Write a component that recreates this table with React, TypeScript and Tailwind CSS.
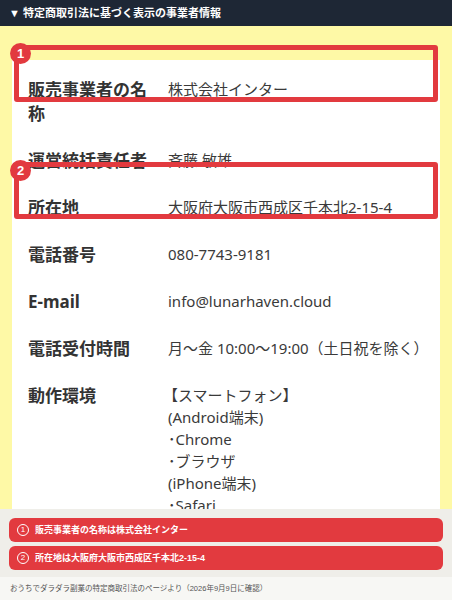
const ROWS = [
  { label: '販売事業者の名称', value: ['株式会社インター'] },
  { label: '運営統括責任者', value: ['斉藤 敏雄'] },
  { label: '所在地', value: ['大阪府大阪市西成区千本北2-15-4'] },
  { label: '電話番号', value: ['080-7743-9181'] },
  { label: 'E-mail', value: ['info@lunarhaven.cloud'] },
  { label: '電話受付時間', value: ['月〜金 10:00〜19:00（土日祝を除く）'] },
  {
    label: '動作環境',
    value: ['【スマートフォン】', '(Android端末)', '･Chrome', '･ブラウザ', '(iPhone端末)', '･Safari'],
  },
]

const NOTES = [
  { num: '1', text: '販売事業者の名称は株式会社インター' },
  { num: '2', text: '所在地は大阪府大阪市西成区千本北2-15-4' },
]

const font = "font-['Liberation_Sans','Noto_Sans_CJK_JP',sans-serif]"

function Marker({ num, top }: { num: string; top: string }) {
  return (
    <div className={`absolute left-[14px] w-[424px] h-[57px] ${top} rounded-[3px] border-[5px] border-[#e23a3f]`}>
      <div className="absolute -left-[9px] -top-[7px] w-[21px] h-[21px] rounded-full bg-[#e23a3f] flex items-center justify-center text-white text-[13px] font-bold leading-none">
        {num}
      </div>
    </div>
  )
}

export default function App() {
  return (
    <div className={`h-[600px] w-[452px] flex flex-col overflow-hidden ${font}`}>
      <div className="h-[26px] shrink-0 bg-[#1e2735] flex items-center pl-[9px] text-white text-[11px] font-bold">
        ▼ 特定商取引法に基づく表示の事業者情報
      </div>

      <main className="relative flex-1 min-h-0 overflow-hidden bg-[#fef9a6] px-[12px] pt-[34px]">
        <div className="bg-white pt-[7px] pl-[16px] pr-[12px]">
          {ROWS.map(({ label, value }) => (
            <div key={label} className="flex items-start gap-[8px] pt-[11px] pb-[12px]">
              <div className="w-[132px] shrink-0 text-[17px] leading-[24px] font-bold text-[#333] font-['Noto_Sans','Noto_Sans_CJK_JP',sans-serif]">
                {label}
              </div>
              <div className="flex-1 text-[15px] leading-[22px] text-[#3a3a3a] font-['Noto_Sans','Noto_Sans_CJK_JP',sans-serif]">
                {value.map((line) => (
                  <div key={line} className={line.startsWith('【') ? '-ml-[5px]' : ''}>
                    {line}
                  </div>
                ))}
              </div>
            </div>
          ))}
        </div>

        <Marker num="1" top="top-[19px]" />
        <Marker num="2" top="top-[136px]" />
      </main>

      <div className="shrink-0 bg-[#efeee9] px-[9px] pt-[9px] pb-[7px] flex flex-col gap-[4px]">
        {NOTES.map(({ num, text }) => (
          <div key={num} className="h-[24px] rounded-[6px] bg-[#e23a3f] flex items-center pl-[8px] gap-[6px] text-white">
            <span className="w-[12px] h-[12px] shrink-0 rounded-full border border-white flex items-center justify-center text-[8px] leading-none">
              {num}
            </span>
            <span className="text-[9px] leading-[14px] font-bold">{text}</span>
          </div>
        ))}
      </div>

      <div className="h-[23px] shrink-0 bg-[#f7f7f4] flex items-center pl-[10px] text-[7.5px] text-[#555]">
        おうちでダラダラ副業の特定商取引法のページより（2026年9月9日に確認）
      </div>
    </div>
  )
}
